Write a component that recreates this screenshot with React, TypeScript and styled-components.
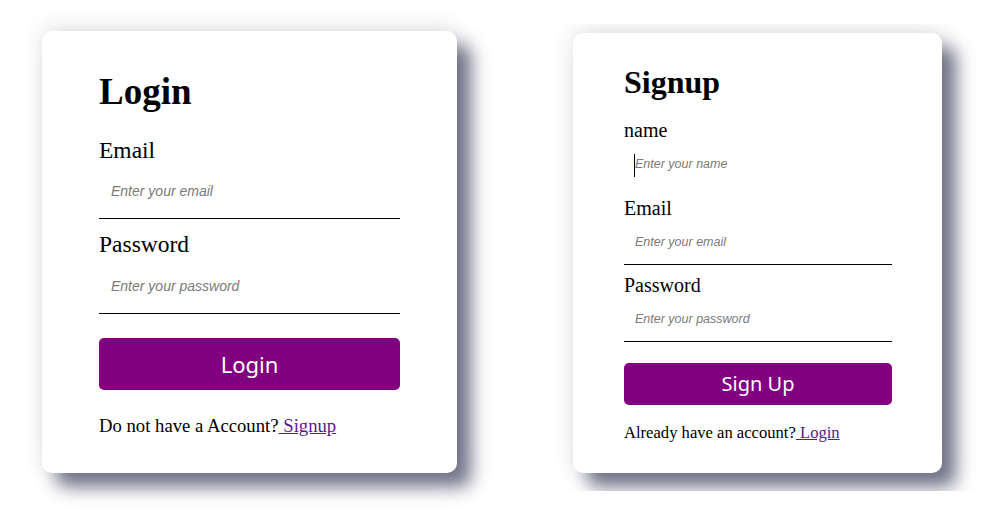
import React from 'react'
import styled, { createGlobalStyle } from 'styled-components'

const GlobalStyle = createGlobalStyle`
  html, body {
    margin: 0;
    padding: 0;
    background: #ffffff;
  }
  body {
    font-family: "Liberation Serif", "Times New Roman", serif;
    color: #000;
  }
`

// sizes for the two cards (the right one is a smaller capture)
type Size = 'lg' | 'sm'

const metrics = {
  lg: {
    width: 415,
    pad: '38.6px 57px 36.8px',
    title: 37,
    titleGap: 11.9,
    label: 23.5,
    labelGap: 12.3,
    input: 55.4,
    inputPad: 12,
    holder: 14,
    btnGap: 24,
    btn: 52,
    btnFont: 22,
    footGap: 24.7,
    foot: 18.7,
  },
  sm: {
    width: 369,
    pad: '30.6px 50px 30px 51px',
    title: 32,
    titleGap: 8.65,
    label: 20,
    labelGap: 9.7,
    input: 45,
    inputPad: 11,
    holder: 12.5,
    btnGap: 20.3,
    btn: 42,
    btnFont: 20,
    footGap: 18.9,
    foot: 16.6,
  },
}

const Page = styled.div`
  display: flex;
  align-items: flex-start;
  padding: 31px 0 0 42px;
  width: 998px;
  height: 520px;
  box-sizing: border-box;
  overflow: hidden;
`

const Frame = styled.div`
  margin: -7px 0 0 96px;
  padding: 9px 40px 0 20px;
  height: 467px;
  box-sizing: border-box;
  overflow: hidden;
`

const Card = styled.div<{ $size: Size }>`
  display: flex;
  flex-direction: column;
  width: ${p => metrics[p.$size].width}px;
  padding: ${p => metrics[p.$size].pad};
  box-sizing: border-box;
  background: #fff;
  border-radius: 10px;
  box-shadow: 0 -4px 22px rgba(40, 40, 60, 0.12),
    14px 14px 18px rgba(62, 64, 92, 0.72);
`

const Title = styled.h1<{ $size: Size }>`
  margin: 0 0 ${p => metrics[p.$size].titleGap}px;
  font-size: ${p => metrics[p.$size].title}px;
  font-weight: bold;
  line-height: normal;
`

const Field = styled.div<{ $size: Size }>`
  position: relative;
  display: flex;
  flex-direction: column;
  margin-top: ${p => metrics[p.$size].labelGap}px;
`

const Label = styled.label<{ $size: Size }>`
  font-size: ${p => metrics[p.$size].label}px;
  line-height: normal;
`

const Input = styled.input<{ $size: Size; $bare?: boolean }>`
  height: ${p => metrics[p.$size].input}px;
  box-sizing: border-box;
  margin: 0;
  padding: 0 ${p => metrics[p.$size].inputPad}px;
  border: none;
  border-bottom: 1px solid ${p => (p.$bare ? 'transparent' : '#000')};
  outline: none;
  background: transparent;
  font-family: "Liberation Sans", Arial, sans-serif;
  font-size: ${p => metrics[p.$size].holder}px;
  &::placeholder {
    color: #7a7a7a;
    font-style: italic;
  }
`

// text caret of the focused name input
const Caret = styled.span`
  position: absolute;
  left: 10px;
  bottom: 10px;
  width: 1px;
  height: 23px;
  background: #000;
`

const Button = styled.button<{ $size: Size }>`
  display: block;
  width: 100%;
  height: ${p => metrics[p.$size].btn}px;
  margin-top: ${p => metrics[p.$size].btnGap}px;
  border: none;
  border-radius: 5px;
  background: #800080;
  color: #fff;
  font-family: "Noto Sans", "Open Sans", sans-serif;
  font-size: ${p => metrics[p.$size].btnFont}px;
  cursor: pointer;
`

const Footer = styled.p<{ $size: Size }>`
  margin: ${p => metrics[p.$size].footGap}px 0 0;
  font-size: ${p => metrics[p.$size].foot}px;
  line-height: normal;
`

const Link = styled.a`
  color: #551a8b;
  text-decoration: underline;
`

const App = () => (
  <>
    <GlobalStyle />
    <Page>
      <Card $size="lg">
        <Title $size="lg">Login</Title>
        <Field $size="lg">
          <Label $size="lg">Email</Label>
          <Input $size="lg" type="email" placeholder="Enter your email" />
        </Field>
        <Field $size="lg">
          <Label $size="lg">Password</Label>
          <Input $size="lg" type="password" placeholder="Enter your password" />
        </Field>
        <Button $size="lg">Login</Button>
        <Footer $size="lg">
          Do not have a Account?<Link href="#signup"> Signup</Link>
        </Footer>
      </Card>

      <Frame>
        <Card $size="sm">
          <Title $size="sm">Signup</Title>
          <Field $size="sm">
            <Label $size="sm">name</Label>
            <Input $size="sm" $bare type="text" placeholder="Enter your name" />
            <Caret />
          </Field>
          <Field $size="sm">
            <Label $size="sm">Email</Label>
            <Input $size="sm" type="email" placeholder="Enter your email" />
          </Field>
          <Field $size="sm">
            <Label $size="sm">Password</Label>
            <Input $size="sm" type="password" placeholder="Enter your password" />
          </Field>
          <Button $size="sm">Sign Up</Button>
          <Footer $size="sm">
            Already have an account?<Link href="#login"> Login</Link>
          </Footer>
        </Card>
      </Frame>
    </Page>
  </>
)

export default App
